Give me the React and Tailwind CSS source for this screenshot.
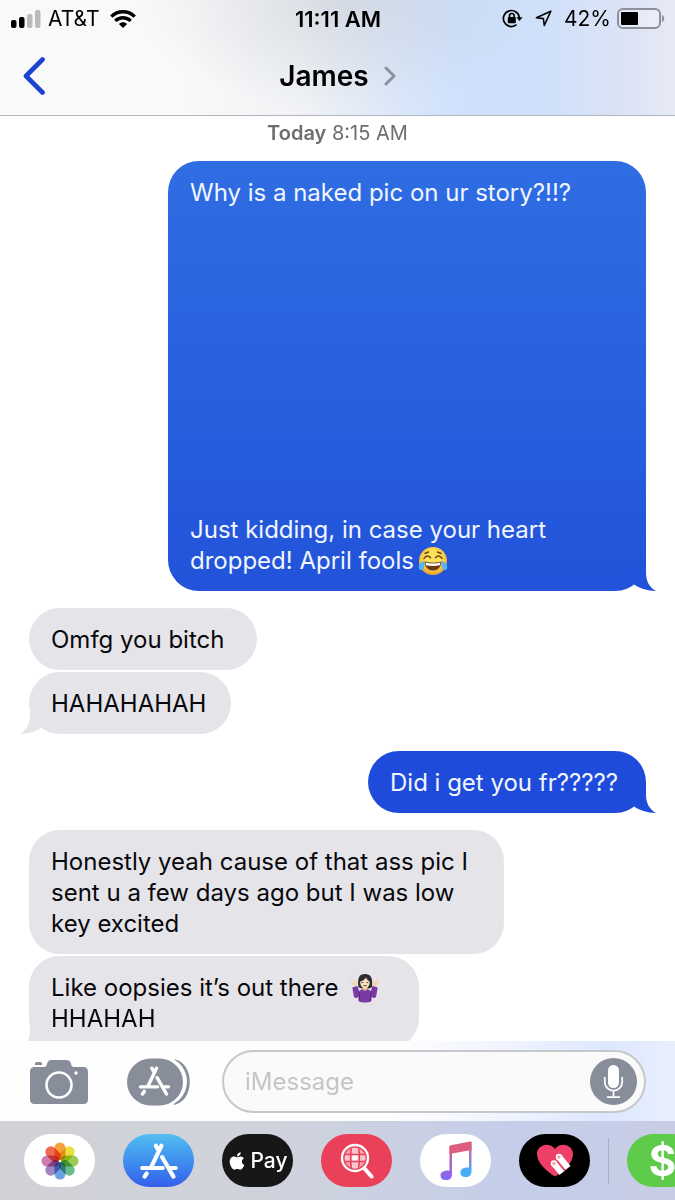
import { FaApple } from "react-icons/fa";

function SignalIcon() {
  return (
    <svg width="30" height="18" viewBox="0 0 30 18" aria-hidden="true">
      <rect x="0" y="10" width="5.500" height="8" rx="2" />
      <rect x="8" y="7" width="5.500" height="11" rx="2" />
      <rect x="16" y="4" width="5.500" height="14" rx="2" fill="#bbbbbd" />
      <rect x="24" y="0" width="5.500" height="18" rx="2" fill="#bbbbbd" />
    </svg>
  );
}

function WifiIcon() {
  return (
    <svg width="26" height="18" viewBox="0 0 26 18" fill="none" stroke="#000" strokeWidth="3.4" aria-hidden="true">
      <path d="M1.3 6.6C7.8.2 18.200.2 24.700 6.600" />
      <path d="M5.300 10.900c4.300-4.200 11.100-4.200 15.400 0" />
      <path d="M13 18 8.900 13.900c2.300-2.200 5.900-2.200 8.200 0Z" fill="#000" stroke="none" />
    </svg>
  );
}

function LockIcon() {
  return (
    <svg width="21" height="19" viewBox="0 0 21 19" fill="none" stroke="#000" strokeWidth="1.700" aria-hidden="true">
      <path d="M14.500 15.700A8 8 0 1 1 17.400 9" />
      <path d="m14.300 8.300 3.200 3.700 3-3.700Z" fill="#000" stroke="none" />
      <rect x="5.800" y="8" width="8" height="6.200" rx="1" fill="#000" stroke="none" />
      <path d="M7.500 8.500V6.800a2.300 2.300 0 0 1 4.600 0v1.700" />
    </svg>
  );
}

function LocationIcon() {
  return (
    <svg width="17" height="17" viewBox="0 0 17 17" fill="none" stroke="#000" strokeWidth="1.600" strokeLinejoin="round" aria-hidden="true">
      <path d="M15.800 1.200 9.300 15.500 8.400 8.600 1.400 7.800Z" />
    </svg>
  );
}

function BatteryIcon() {
  return (
    <svg width="48" height="21" viewBox="0 0 48 21" aria-hidden="true">
      <rect x="1" y="1" width="42" height="19" rx="5" fill="#ffffff40" stroke="#8e919b" strokeWidth="2" />
      <rect x="4" y="4" width="17" height="13" rx="1" />
      <path d="M45 7c3 1 3 6 0 7Z" fill="#8e919b" />
    </svg>
  );
}

function JoyEmoji() {
  return (
    <svg role="img" aria-label="face with tears of joy" className="ml-1 inline-block align-[-7px]" width="30" height="30" viewBox="0 0 30 30">
      <defs>
        <radialGradient id="joy" cx="50%" cy="40%" r="58%">
          <stop offset="0.5" stopColor="#fde158" />
          <stop offset="1" stopColor="#eda52d" />
        </radialGradient>
      </defs>
      <circle cx="15" cy="15" r="14" fill="url(#joy)" />
      <path d="M6.500 15.500C12 17 18 17 23.500 15.500 23 21.500 19.500 24.500 15 24.500s-8-3-8.500-9Z" fill="#6a3b14" />
      <path d="M7.500 16.500c5 1.200 10 1.200 15 0l-.6 2.800c-4.500 1-9.300 1-13.800 0Z" fill="#fff" />
      <path d="M6 12.500c1.500-3 4.500-3.500 6.500-.8M17.500 11.700c2-2.700 5-2.200 6.500.8M7 7.500 10.500 6M23 7.500 19.500 6" fill="none" stroke="#704315" strokeWidth="1.500" strokeLinecap="round" />
      <path d="M6.500 15C3 16 .3 18.500.8 22c.5 2.800 4.200 2.800 5 .2.700-2.200.8-4.800.7-7.200ZM23.500 15c3.500 1 6.200 3.500 5.700 7-.5 2.800-4.200 2.800-5 .2-.7-2.200-.8-4.800-.7-7.200Z" fill="#58b5f5" />
    </svg>
  );
}

function ShrugEmoji() {
  return (
    <svg role="img" aria-label="woman shrugging" className="ml-1 inline-block align-[-7px]" width="32" height="30" viewBox="0 0 32 30">
      <path d="M9.500 14C8 4.500 10.500 1 16 1s8 3.500 7 13c-2 2-12 2-13.500 0Z" fill="#2b2b30" />
      <path d="M8 25 5 12.500.8 8.200l1-.7 2.500 2L3.500 6l1.300-.3 1.600 4L7.500 8l.8 1.200L8 15ZM24 25l3-12.500 4.200-4.300-1-.7-2.500 2L28.500 6l-1.300-.3-1.600 4L24.500 8l-.8 1.200L24 15Z" fill="#f3d4b5" />
      <path d="M3.300 14.500 8.500 13l1.600 5 3.400-2h5l3.400 2 1.600-5 5.200 1.500-1.500 8.500c-.5 2.500-3 2.500-4.700.8V28c-3 2-10 2-13 0v-4.200c-1.700 1.700-4.200 1.700-4.700-.8Z" fill="#793aa3" />
      <path d="m10 19 .8 8.500M22 19l-.8 8.500" stroke="#582579" />
      <path d="M13.500 12.500h5V16c-1 2-4 2-5 0Z" fill="#e9bd95" />
      <path d="M11.200 8.500C14 8 15.500 6.500 17 4.500c1 2 2 3 3.700 4 .3 4-1.700 6.500-4.700 6.500s-5-2.500-4.800-6.500Z" fill="#f9dec4" />
      <path d="M13 9.500h1M18 9.500h1M14.800 12.600h2.400" stroke="#693d37" strokeLinecap="round" />
    </svg>
  );
}

// The curl at the bottom corner of the last bubble in a group
function Tail({ side, color }) {
  return (
    <svg
      className={side === "right" ? "absolute -right-[10px] bottom-0" : "absolute -left-[9px] bottom-0 -scale-x-100"}
      width="36"
      height="36"
      viewBox="0 0 36 36"
      aria-hidden="true"
    >
      <path d="M26 4V17C26 26 29 32 36 36 27 36 19 33 14 29.500L16 8Z" fill={color} />
    </svg>
  );
}

function Sent({ children, className, tail }) {
  return (
    <div className={`relative ml-auto max-w-full rounded-[31px] px-[22px] pt-4 pb-[15px] text-[#f1f6ff] ${className}`}>
      {children}
      {tail && <Tail side="right" color={tail} />}
    </div>
  );
}

function Received({ children, className, tail }) {
  return (
    <div className={`relative max-w-full rounded-[31px] bg-[#e5e4e9] px-[22px] pt-4 pb-[15px] text-[#08080c] ${className}`}>
      {children}
      {tail && <Tail side="left" color="#e5e4e9" />}
    </div>
  );
}

function CameraIcon() {
  return (
    <svg width="58" height="44" viewBox="0 0 58 44" aria-hidden="true">
      <path d="M5 3.500q0-1.500 1.500-1.500h4q1.500 0 1.500 1.500V5H5Z" fill="#878d99" />
      <path d="M5 7h9c2 0 2.500-1 3-3 .7-3 2-4 5-4h14c3 0 4.300 1 5 4 .5 2 1 3 3 3h9c3.500 0 5 1.500 5 5v27c0 3.500-1.500 5-5 5H5c-3.500 0-5-1.500-5-5V12c0-3.500 1.500-5 5-5Z" fill="#878d99" />
      <circle cx="29" cy="25" r="12.500" fill="none" stroke="#fff" strokeWidth="2.600" />
      <circle cx="46" cy="13" r="1.700" fill="#fff" />
    </svg>
  );
}

function AppStoreMark({ x, y, width, height }) {
  return (
    <svg x={x} y={y} width={width} height={height} viewBox="0 0 110 105" fill="none" stroke="#fff" strokeWidth="12" strokeLinecap="round">
      <path d="M62 8 33 69M6 73H66M19 89l-6 9M46 8l6 11M64 41l33 57M88 73h16" />
    </svg>
  );
}

function AppsIcon() {
  return (
    <svg width="64" height="48" viewBox="0 0 64 48" aria-hidden="true">
      <path d="M47 1c21 4 21 42 0 46Z" fill="#878d99" />
      <rect x="-3" y="-2" width="63" height="51" rx="25.500" fill="#fff" />
      <rect x="0" y="0.500" width="56" height="47" rx="23.500" fill="#878d99" />
      <AppStoreMark x={11} y={8} width={33} height={30} />
    </svg>
  );
}

function MicIcon() {
  return (
    <svg width="47" height="47" viewBox="0 0 47 47" fill="none" stroke="#fff" strokeWidth="1.700" aria-hidden="true">
      <circle cx="23.500" cy="23.500" r="23.500" fill="#878d99" stroke="none" />
      <rect x="18" y="7" width="11" height="23" rx="5.500" fill="#fff" stroke="none" />
      <path d="M14.800 19v5a8.700 8.700 0 0 0 17.400 0v-5M23.500 32.700V39M17 39.200h13" />
    </svg>
  );
}

const petals = ["#f7a13a", "#ebe03b", "#9bcb55", "#68bd90", "#6ba3e0", "#a084c4", "#cf7bab", "#ee6b52"];

function PhotosIcon() {
  return (
    <svg width="38" height="38" viewBox="0 0 38 38" aria-hidden="true">
      {petals.map((color, i) => (
        <rect
          key={color}
          x="13.500"
          y="0.500"
          width="11"
          height="17.500"
          rx="5.500"
          fill={color}
          transform={`rotate(${i * 45} 19 19)`}
          style={{ mixBlendMode: "multiply" }}
        />
      ))}
    </svg>
  );
}

function ImagesIcon() {
  return (
    <svg width="34" height="36" viewBox="0 0 34 36" fill="none" aria-hidden="true">
      <clipPath id="globe">
        <circle cx="15" cy="15" r="10.500" />
      </clipPath>
      <g clipPath="url(#globe)">
        <path d="M4 4h22v22H4Z" fill="#f7a2ad" />
        <path d="M12 5h6v6h-6ZM5 12h6v6H5ZM12 12h6v6h-6ZM19 12h7v6h-7ZM12 19h6v7h-6Z" fill="#fbc6cc" />
        <path d="M12.500 12h5v5.500h-5Z" fill="#fff" />
        <path d="M4 11.500h22M4 18.500h22M11.500 4q-2 11 0 22M18.500 4q2 11 0 22" stroke="#eb4059" strokeWidth="1.400" />
      </g>
      <circle cx="15" cy="15" r="13" stroke="#fff" strokeWidth="2.300" />
      <path d="m24.500 25.500 7 8" stroke="#fff" strokeWidth="4" strokeLinecap="round" />
    </svg>
  );
}

function MusicIcon() {
  return (
    <svg width="32" height="40" viewBox="0 0 32 40" aria-hidden="true">
      <defs>
        <linearGradient id="noteLeft" x1="0" y1="0" x2="0" y2="1">
          <stop offset="0" stopColor="#df5b87" />
          <stop offset="1" stopColor="#8068ff" />
        </linearGradient>
        <linearGradient id="noteRight" x1="0" y1="0" x2="0" y2="1">
          <stop offset="0" stopColor="#d95a7d" />
          <stop offset="0.500" stopColor="#967fdb" />
          <stop offset="0.800" stopColor="#45adf6" />
        </linearGradient>
      </defs>
      <path d="M9.500 5H12v28c0 4-2 6-6 6-3.500 0-5.500-1.500-5.500-4.500C.5 31 3 29.500 9.500 29.500Z" fill="url(#noteLeft)" />
      <path d="M29 1h2.500v29c0 4-2 6-6 6-3.500 0-5-1.500-5-4.500 0-3.500 2-5 8.500-5Z" fill="url(#noteRight)" />
      <path d="M9.500 6q0-1.500 1.500-1.800L30 .5q1.500-.3 1.500 1.200V9l-22 4Z" fill="#dc5d80" />
    </svg>
  );
}

function DigitalTouchIcon() {
  return (
    <svg width="36" height="33" viewBox="0 0 36 33" aria-hidden="true">
      <path d="M18 32.500C11 28 0 20 0 10 0 1 12-3 18 5c6-8 18-4 18 5 0 10-11 18-18 22.500Z" fill="#ed3f68" />
      <path d="M17 19.500 25 29M22 13l9 11" stroke="#fff" strokeWidth="6.500" />
      <circle cx="17" cy="19.500" r="3.250" fill="#fff" />
      <circle cx="22" cy="13" r="3.250" fill="#fff" />
      <circle cx="17" cy="19.500" r="1.700" fill="#f2a5b4" />
      <circle cx="22" cy="13" r="1.700" fill="#f2a5b4" />
      <path d="m20 17 8 10" stroke="#ed3f68" strokeWidth="1.500" />
    </svg>
  );
}

function AppPill({ label, className, children }) {
  return (
    <button
      aria-label={label}
      className={`flex h-[53px] w-[71px] shrink-0 items-center justify-center rounded-full ${className}`}
    >
      {children}
    </button>
  );
}

export default function App() {
  return (
    <div className="flex h-screen flex-col overflow-hidden bg-white font-['Inter',sans-serif]">
      <header className="shrink-0 border-b border-[#b2b5bf] bg-[radial-gradient(ellipse_200px_110px_at_50%_0%,#b8bdc866,#b8bdc800),linear-gradient(90deg,#f9f9f9_28%,#f0f2f5_45%,#dce8f9_58%,#cfe1fc_68%,#cfe0fa_80%,#dde4f5_94%,#e8ebf5)]">
        <div className="grid h-[37px] grid-cols-[1fr_auto_1fr] items-center pr-[10px] pl-[11px] text-[21px] leading-6">
          <div className="flex items-center gap-[7px]">
            <SignalIcon />
            <span>AT&amp;T</span>
            <span className="pl-1">
              <WifiIcon />
            </span>
          </div>
          <span className="text-[22px] font-semibold">11:11 AM</span>
          <div className="flex items-center justify-end">
            <LockIcon />
            <span className="px-3">
              <LocationIcon />
            </span>
            <span className="pr-[6px]">42%</span>
            <BatteryIcon />
          </div>
        </div>

        <div className="grid h-[78px] grid-cols-[1fr_auto_1fr] items-center px-[23px]">
          <button aria-label="Back" className="w-fit">
            <svg width="22" height="38" viewBox="0 0 22 38" fill="none" stroke="#1c43cf" strokeWidth="4.600" strokeLinecap="round" strokeLinejoin="round">
              <path d="M19.500 2.500 3 19l16.500 16.500" />
            </svg>
          </button>
          <button className="flex items-center gap-[15px] text-[28px] leading-8 font-semibold">
            <h1>James</h1>
            <svg width="12" height="20" viewBox="0 0 12 20" fill="none" stroke="#8b909b" strokeWidth="3" strokeLinecap="round" strokeLinejoin="round" aria-hidden="true">
              <path d="m2 2 8 8-8 8" />
            </svg>
          </button>
        </div>
      </header>

      <main className="min-h-0 flex-1 overflow-hidden px-[29px] text-[24px] leading-[31px]">
        <p className="pt-[5px] pb-4 text-center text-[20px] leading-6 text-[#6e6e72]">
          <span className="font-semibold">Today</span> 8:15 AM
        </p>

        <Sent className="w-[478px] bg-linear-to-b from-[#2f6de3] to-[#2253da]" tail="#2253da">
          <p>Why is a naked pic on ur story?!!?</p>
          <p className="mt-[306px]">
            Just kidding, in case your heart
            <br />
            dropped! April fools
            <JoyEmoji />
          </p>
        </Sent>

        <div className="mt-[17px] flex flex-col gap-[2px]">
          <Received className="w-[228px]">Omfg you bitch</Received>
          <Received className="w-[202px]" tail>
            HAHAHAHAH
          </Received>
        </div>

        <div className="mt-[17px]">
          <Sent className="w-[278px] bg-[#1f4bdb]" tail="#1f4bdb">
            Did i get you fr?????
          </Sent>
        </div>

        <div className="mt-[17px] flex flex-col gap-[2px]">
          <Received className="w-[475px]">
            Honestly yeah cause of that ass pic I
            <br />
            sent u a few days ago but I was low
            <br />
            key excited
          </Received>
          <Received className="w-[390px]" tail>
            Like oopsies it’s out there <ShrugEmoji />
            <br />
            HHAHAH
          </Received>
        </div>
      </main>

      <footer className="shrink-0">
        <div className="flex h-20 items-center bg-[linear-gradient(90deg,#fefefe_58%,#f0f4ff_75%,#dce7ff_90%,#e9effd)] pt-px pr-[29px] pl-[30px]">
          <button aria-label="Camera">
            <CameraIcon />
          </button>
          <button aria-label="Apps" className="ml-[39px]">
            <AppsIcon />
          </button>
          <div className="ml-[31px] flex h-[63px] min-w-0 flex-1 items-center rounded-full border-2 border-[#c7c8cd] bg-[#fafafa] pr-[7px] pl-[21px]">
            <input
              type="text"
              aria-label="Message"
              placeholder="iMessage"
              className="min-w-0 flex-1 bg-transparent text-[24px] leading-[31px] outline-none placeholder:text-[#c4c4c9]"
            />
            <button aria-label="Record audio">
              <MicIcon />
            </button>
          </div>
        </div>

        <nav aria-label="iMessage apps" className="flex h-[79px] items-center gap-7 overflow-hidden bg-[linear-gradient(90deg,#d1d2d7,#d0d3dc_40%,#c5cee9_75%,#c8cde5)] pl-6">
          <AppPill label="Photos" className="bg-white">
            <PhotosIcon />
          </AppPill>
          <AppPill label="App Store" className="bg-linear-to-b from-[#54bdf1] to-[#355eea]">
            <svg width="38" height="36" aria-hidden="true">
              <AppStoreMark x={0} y={0} width={38} height={36} />
            </svg>
          </AppPill>
          <AppPill label="Apple Pay" className="gap-[3px] bg-[#171717] text-[21px] leading-6 font-medium text-white">
            <FaApple size={20} />
            Pay
          </AppPill>
          <AppPill label="Images" className="bg-[#eb4059]">
            <ImagesIcon />
          </AppPill>
          <AppPill label="Music" className="bg-white">
            <MusicIcon />
          </AppPill>
          <AppPill label="Digital Touch" className="bg-black">
            <DigitalTouchIcon />
          </AppPill>
          <div className="-ml-[10px] flex shrink-0 items-center gap-[18px]">
            <span className="h-[46px] w-px bg-[#a9afc3]" />
            <AppPill label="Cash" className="bg-[#5ecb4b] text-[42px] leading-[53px] font-bold text-white">
              $
            </AppPill>
          </div>
        </nav>
      </footer>
    </div>
  );
}
